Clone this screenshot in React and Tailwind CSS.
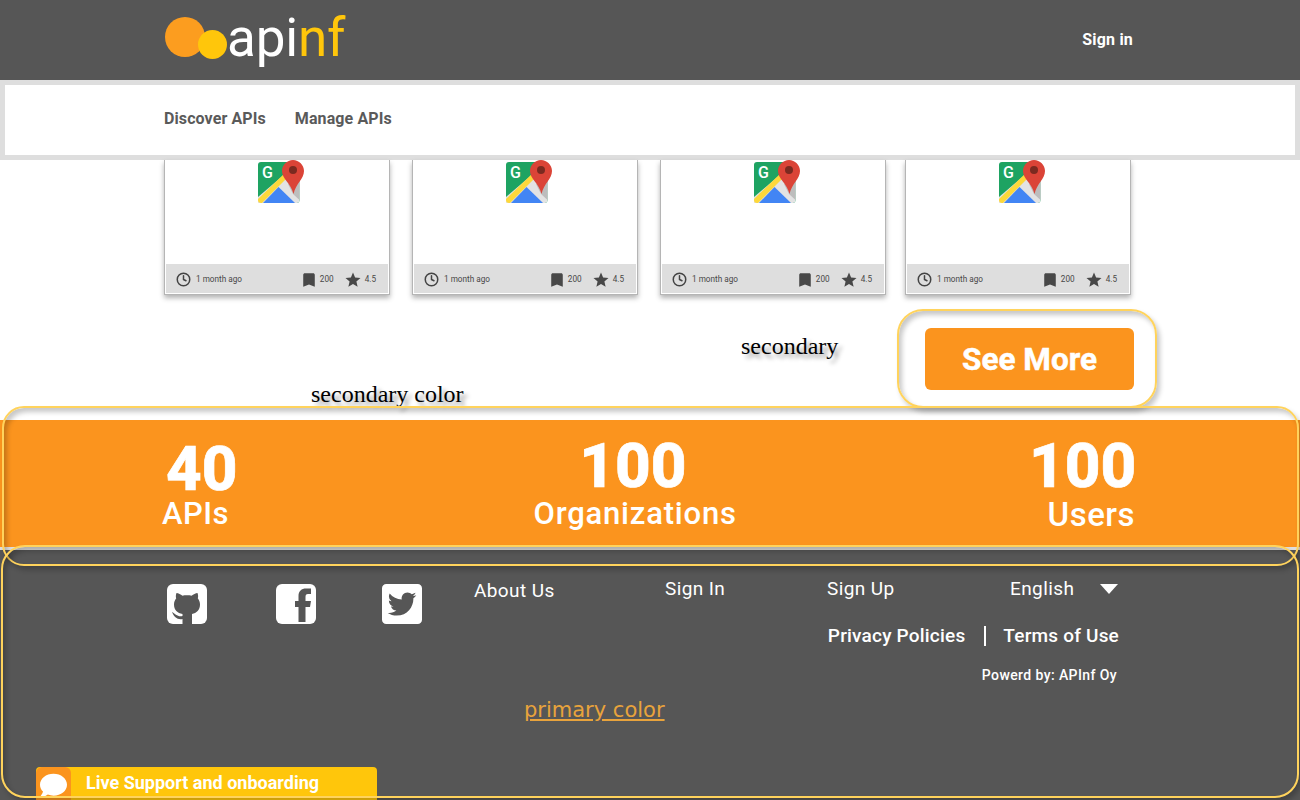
import React from "react";
import { FaTwitterSquare, FaComment } from "react-icons/fa";
import { MdBookmark, MdStar } from "react-icons/md";
import { Clock } from "lucide-react";

const MapsIcon = () => (
  <svg width="46" height="44" viewBox="0 0 46 44">
    <rect x="0" y="2" width="41.5" height="41" rx="3" fill="#1ea362" />
    <path d="M0 43 L0 37 L27 14 L41.5 14 L41.5 40 Q41.5 43 38.5 43 Z" fill="#e3e3e3" />
    <path d="M30 24 L35 34 L41.5 40 L41.5 18 Z" fill="#bdbdbd" />
    <path d="M0 39 L28 12 L31 16 L4 43 L3 43 Q0 43 0 40 Z" fill="#fdd83b" />
    <path d="M5 43 L20.5 27 L37 43 Z" fill="#4285f4" />
    <path d="M35 0 C41 0 46 5 46 11 C46 19 38 23 35.5 34 C33 23 24 19 24 11 C24 5 29 0 35 0 Z" fill="#db4437" />
    <circle cx="35" cy="10" r="4" fill="#7b2a20" />
    <text x="4" y="18" fontSize="16" fontWeight="500" fill="#fff" fontFamily="Roboto, sans-serif">G</text>
  </svg>
);

const GithubTile = () => (
  <svg width="40" height="40" viewBox="0 0 40 40">
    <rect width="40" height="40" rx="6" fill="#fff" />
    <path
      d="M9.5 9 C11.5 9 13.5 10.5 15.5 11.8 C17.5 11.2 22.5 11.2 24.5 11.8 C26.5 10.5 28.5 9 30.5 9 C31.3 11 31.3 13 30.8 14.2 C32.2 16 33 18 33 20.5 C33 26 29.5 29.2 25 30 L25 40 L15.5 40 L15.5 35 C10.5 36 7 33 5 28 C8 29.5 11 33.5 15.5 32 L15.5 30 C10.5 29.2 7 26 7 20.5 C7 18 7.8 16 9.2 14.2 C8.7 13 8.7 11 9.5 9 Z"
      fill="#565656"
    />
  </svg>
);

const FacebookTile = () => (
  <svg width="40" height="40" viewBox="0 0 40 40">
    <rect width="40" height="40" rx="6" fill="#fff" />
    <path
      d="M22.5 38 L22.5 23 L19 23 L19 17 L22.5 17 L22.5 12 C22.5 7 25.5 4.5 30 4.5 L35 4.5 L35 10 L32 10 C30 10 29.5 11 29.5 13 L29.5 17 L35 17 L34 23 L29.5 23 L29.5 38 Z"
      fill="#565656"
    />
  </svg>
);

const ApiCard = () => (
  <div className="w-[226px] h-[135px] bg-white flex flex-col border-x border-b border-[#b5b5b5] shadow-[0_3px_5px_rgba(0,0,0,0.3)]">
    <div className="flex-1 flex justify-center">
      <div className="ml-[8px]">
        <MapsIcon />
      </div>
    </div>
    <div className="h-[29px] mb-[1px] mx-px bg-[#dedede] flex items-center pt-[2px] pl-[10px] pr-[12px] text-[#484848] text-[8.2px]">
      <Clock size={15} strokeWidth={2.4} className="text-[#444]" />
      <span className="ml-[5px]">1 month ago</span>
      <MdBookmark size={18} className="ml-auto text-[#484848] scale-x-110" />
      <span className="ml-[2px]">200</span>
      <MdStar size={18} className="ml-[10px] text-[#484848]" />
      <span className="ml-[3px]">4.5</span>
    </div>
  </div>
);

const Annotation = ({ className, children }) => (
  <span className={`absolute font-['Liberation_Serif',serif] text-[24px] leading-[28px] text-black [text-shadow:4px_4px_4px_rgba(0,0,0,0.4)] ${className}`}>
    {children}
  </span>
);

const Ring = ({ className }) => (
  <div className={`absolute pointer-events-none border-2 border-[#ffd35c] shadow-[3px_4px_5px_rgba(0,0,0,0.22),inset_3px_4px_5px_rgba(0,0,0,0.22)] ${className}`} />
);

const App = () => {
  return (
    <div className="relative w-[1300px] h-[800px] overflow-hidden bg-white font-['Roboto',sans-serif]">
      {/* Header */}
      <header className="h-[80px] bg-[#565656] flex items-center pl-[165px] pr-[167px]">
        <div className="flex items-center">
          <div className="w-[40px] h-[40px] rounded-full bg-[#fc9d1f] mt-[-6px]" />
          <div className="w-[29px] h-[29px] rounded-full bg-[#ffc60b] -ml-[7px] mt-[8px]" />
          <span className="ml-0 text-[53px] leading-[60px] font-normal tracking-[-0.2px] text-white -mt-[5px]">
            api<span className="text-[#ffc60b]">nf</span>
          </span>
        </div>
        <a className="ml-auto text-white font-bold text-[16px] tracking-[0.2px]">Sign in</a>
      </header>

      {/* Nav */}
      <nav className="h-[80px] bg-white border-[5px] border-[#dedede] flex items-center pl-[159px] gap-[29px] text-[#5a5a5a] font-bold text-[16px] tracking-[0.1px] pb-[3px]">
        <a>Discover APIs</a>
        <a>Manage APIs</a>
      </nav>

      {/* Cards */}
      <section className="h-[260px] pl-[164px]">
        <div className="flex gap-[22px]">
          <ApiCard />
          <ApiCard />
          <div className="-mr-[3px]">
            <ApiCard />
          </div>
          <ApiCard />
        </div>
        <div className="flex justify-end pr-[166px] mt-[33px]">
          <button className="w-[209px] h-[62px] bg-[#fb941e] rounded-[6px] text-white font-bold text-[31.5px] pt-[2px] [-webkit-text-stroke:0.5px_white]">See More</button>
        </div>
      </section>

      {/* Stats */}
      <section className="h-[127px] bg-[#fb941e] flex justify-between pl-[162px] pr-[166px] text-white">
        <div className="w-[75px]">
          <div className="text-[62px] leading-[50px] font-extrabold mt-[24px] ml-[4px] [-webkit-text-stroke:0.7px_white]">40</div>
          <div className="text-[31px] leading-[36px] font-medium tracking-[0.5px] mt-[2px]">APIs</div>
        </div>
        <div className="w-[203px] text-center">
          <div className="text-[62px] leading-[50px] font-extrabold mt-[21px] [-webkit-text-stroke:0.7px_white]">100</div>
          <div className="text-[31px] leading-[36px] font-medium tracking-[0.8px] mt-[5px] pl-[2px]">Organizations</div>
        </div>
        <div className="w-[105px] text-right">
          <div className="text-[62px] leading-[50px] font-extrabold mt-[21px] [-webkit-text-stroke:0.7px_white]">100</div>
          <div className="text-[33px] leading-[36px] font-medium tracking-[0.5px] -mr-[1px] mt-[6px]">Users</div>
        </div>
      </section>

      {/* Footer */}
      <footer className="h-[253px] bg-[#565656] border-t-[3px] border-[#dedede] text-white pl-[167px] relative">
        <div className="flex pt-[31px]">
          <div className="flex gap-[69px] w-[307px] items-start h-[46px] mt-[3px]">
            <GithubTile />
            <FacebookTile />
            <FaTwitterSquare className="w-[40px] h-[46px] -ml-[3px] -mt-[3px]" />
          </div>
          <a className="text-[19px] leading-[24px] tracking-[0.4px] w-[191px] -mt-[2px]">About Us</a>
          <a className="text-[19px] leading-[24px] tracking-[0.4px] w-[162px] -mt-[4px]">Sign In</a>
          <a className="text-[19px] leading-[24px] tracking-[0.4px] w-[183px] -mt-[4px]">Sign Up</a>
          <a className="text-[19px] leading-[24px] tracking-[0.4px] -mt-[4px]">English</a>
          <span className="ml-[26px] mt-[3px] w-0 h-0 border-x-[9px] border-x-transparent border-t-[10px] border-t-white" />
        </div>
        <div className="flex justify-end items-center pr-[181px] -mt-[8px] text-[19px] tracking-[0.2px] font-medium">
          <a>Privacy Policies</a>
          <span className="w-[2px] h-[20px] bg-white ml-[19px] mr-[17px]" />
          <a>Terms of Use</a>
        </div>
        <div className="flex justify-end pr-[183px] mt-[14px] text-[14px] font-medium tracking-[0.4px]">Powerd by: APInf Oy</div>
        <a className="absolute left-[524px] top-[147px] font-['DejaVu_Sans',sans-serif] text-[21px] leading-[26px] text-[#e8a33c] underline">primary color</a>
      </footer>

      {/* Live support widget */}
      <div className="absolute left-[36px] bottom-0 w-[341px] h-[33px] rounded-t-[4px] bg-[#ffc60b] flex items-center text-white font-bold text-[18px]">
        <div className="w-[35px] h-[33px] rounded-t-[6px] bg-[#fb941e] flex items-center justify-center">
          <FaComment size={27} className="mt-[3px]" />
        </div>
        <span className="ml-[15px] -mt-[2px]">Live Support and onboarding</span>
      </div>

      {/* Design notes over the page */}
      <Annotation className="left-[741px] top-[332px]">secondary</Annotation>
      <Annotation className="left-[311px] top-[380px]">secondary color</Annotation>
      <Ring className="left-[897px] top-[309px] w-[260px] h-[99px] rounded-[26px]" />
      <Ring className="left-[2px] top-[406px] w-[1297px] h-[160px] rounded-[22px]" />
      <Ring className="left-[1px] top-[545px] w-[1298px] h-[253px] rounded-[24px]" />
    </div>
  );
};

export default App;
